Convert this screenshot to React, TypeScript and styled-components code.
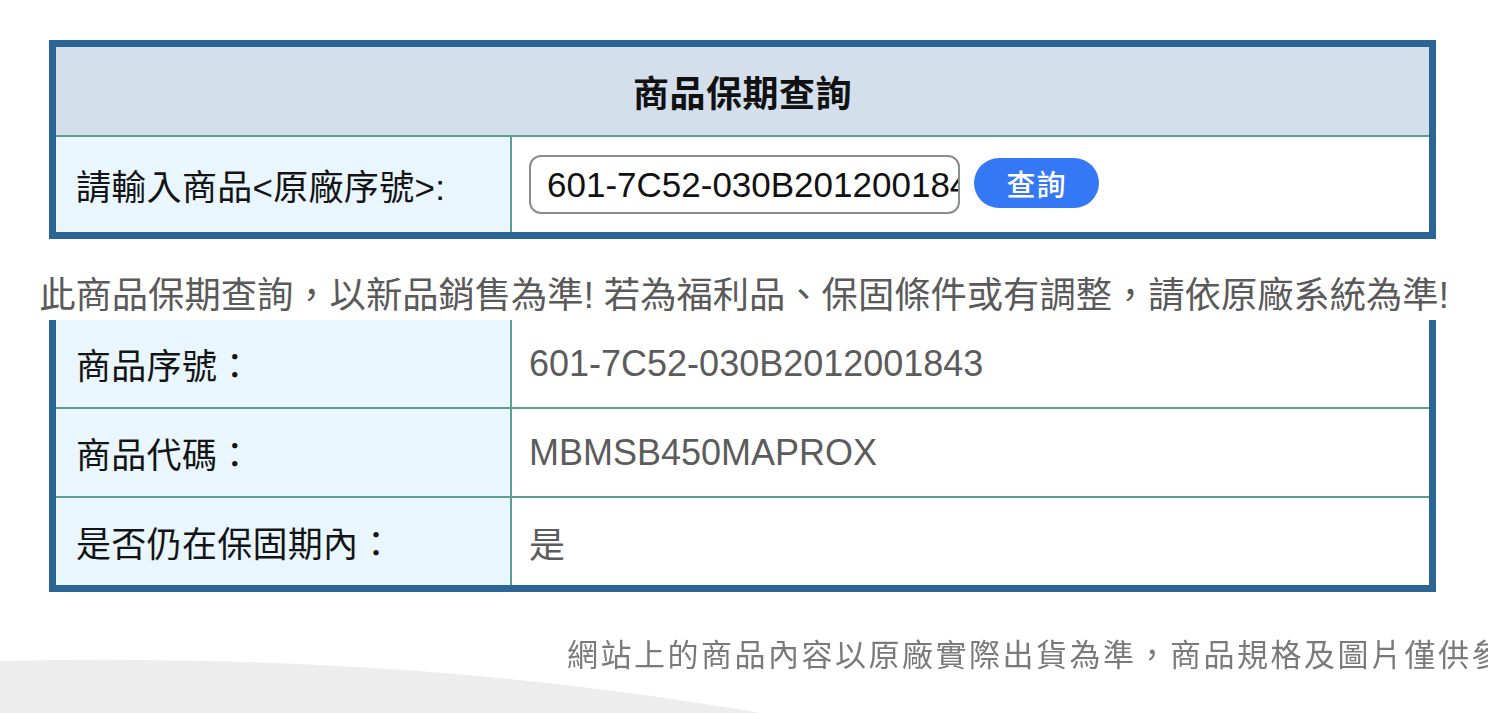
import * as React from "react";
import styled, { createGlobalStyle } from "styled-components";

const GlobalStyle = createGlobalStyle`
    html, body {
        margin: 0;
        padding: 0;
        background: #ffffff;
    }
    body {
        font-family: "Liberation Sans", "Noto Sans CJK TC", sans-serif;
        overflow: hidden;
    }
`;

const BORDER = "#2b6596";
const LINE = "#5e9e8f";
const LABEL_BG = "#e9f6fe";

interface ResultRow {
    label: string;
    value: string;
}

const results: ResultRow[] = [
    { label: "商品序號：", value: "601-7C52-030B2012001843" },
    { label: "商品代碼：", value: "MBMSB450MAPROX" },
    { label: "是否仍在保固期內：", value: "是" },
];

export default function App() {
    const [serial, setSerial] = React.useState("601-7C52-030B2012001843");

    return (
        <Page>
            <GlobalStyle />
            <Container>
                <QueryTable>
                    <HeaderRow>商品保期查詢</HeaderRow>
                    <Row $height={95}>
                        <LabelCell>請輸入商品&lt;原廠序號&gt;:</LabelCell>
                        <ValueCell>
                            <SerialInput
                                value={serial}
                                onChange={(e) => setSerial(e.target.value)}
                            />
                            <QueryButton type="button">查詢</QueryButton>
                        </ValueCell>
                    </Row>
                </QueryTable>
            </Container>

            <Notice>
                此商品保期查詢，以新品銷售為準! 若為福利品、保固條件或有調整，請依原廠系統為準!
            </Notice>

            <Container>
                <ResultTable>
                    {results.map((r) => (
                        <Row key={r.label} $height={87}>
                            <LabelCell>{r.label}</LabelCell>
                            <ValueCell $muted>{r.value}</ValueCell>
                        </Row>
                    ))}
                </ResultTable>
            </Container>

            <Footer>
                <Swoosh viewBox="0 0 800 56" preserveAspectRatio="none">
                    <path d="M0 4 C 260 -2, 520 14, 760 56 L 0 56 Z" fill="#ededed" />
                </Swoosh>
                <FooterText>
                    網站上的商品內容以原廠實際出貨為準，商品規格及圖片僅供參考
                </FooterText>
            </Footer>
        </Page>
    );
}

const Page = styled.div`
    box-sizing: border-box;
    padding-top: 40px;
    width: 1488px;
    height: 713px;
    overflow: hidden;
`;

const Container = styled.div`
    margin: 0 52px 0 49px;
`;

const QueryTable = styled.div`
    border: 7px solid ${BORDER};
`;

const ResultTable = styled.div`
    border: 7px solid ${BORDER};
    border-top: none;
`;

const HeaderRow = styled.div`
    height: 88px;
    display: flex;
    align-items: center;
    justify-content: center;
    background: #d3dfeb;
    border-bottom: 2px solid ${LINE};
    font-size: 36px;
    font-weight: 700;
    letter-spacing: 0.5px;
    color: #111;
`;

const Row = styled.div<{ $height: number }>`
    display: grid;
    grid-template-columns: 456px 1fr;
    height: ${(p) => p.$height}px;
    border-bottom: 2px solid ${LINE};

    &:last-child {
        border-bottom: none;
    }
`;

const LabelCell = styled.div`
    display: flex;
    align-items: center;
    padding-left: 20px;
    background: ${LABEL_BG};
    border-right: 2px solid ${LINE};
    font-size: 35px;
    letter-spacing: 0.3px;
    color: #141414;
    white-space: nowrap;
`;

const ValueCell = styled.div<{ $muted?: boolean }>`
    display: flex;
    align-items: center;
    gap: 14px;
    padding-left: 17px;
    font-size: 36px;
    color: ${(p) => (p.$muted ? "#5c5c5c" : "#141414")};
`;

const SerialInput = styled.input`
    box-sizing: border-box;
    width: 431px;
    height: 59px;
    padding: 0 0 0 16px;
    border: 2px solid #8c8c8c;
    border-radius: 12px;
    font-family: "Liberation Sans", "Noto Sans CJK TC", sans-serif;
    font-size: 35px;
    color: #111;
    background: #fff;
    outline: none;
`;

const QueryButton = styled.button`
    width: 125px;
    height: 50px;
    margin-bottom: 3px;
    border: none;
    border-radius: 25px;
    background: #3478f6;
    color: #ffffff;
    font-family: "Noto Sans CJK TC", sans-serif;
    font-size: 29px;
    font-weight: 500;
    letter-spacing: 1px;
    cursor: pointer;
`;

const Notice = styled.div`
    height: 81px;
    padding-top: 31px;
    box-sizing: border-box;
    line-height: 51px;
    text-align: center;
    white-space: nowrap;
    font-size: 36.3px;
    color: #5a5a5a;
`;

const Footer = styled.div`
    position: relative;
    height: 121px;
    overflow: hidden;
`;

const Swoosh = styled.svg`
    position: absolute;
    left: 0;
    bottom: 0;
    width: 800px;
    height: 56px;
`;

const FooterText = styled.div`
    position: relative;
    padding-left: 567px;
    padding-top: 44px;
    line-height: 40px;
    white-space: nowrap;
    font-size: 31px;
    letter-spacing: 2.5px;
    color: #7a7a7a;
    filter: blur(0.5px);
`;
